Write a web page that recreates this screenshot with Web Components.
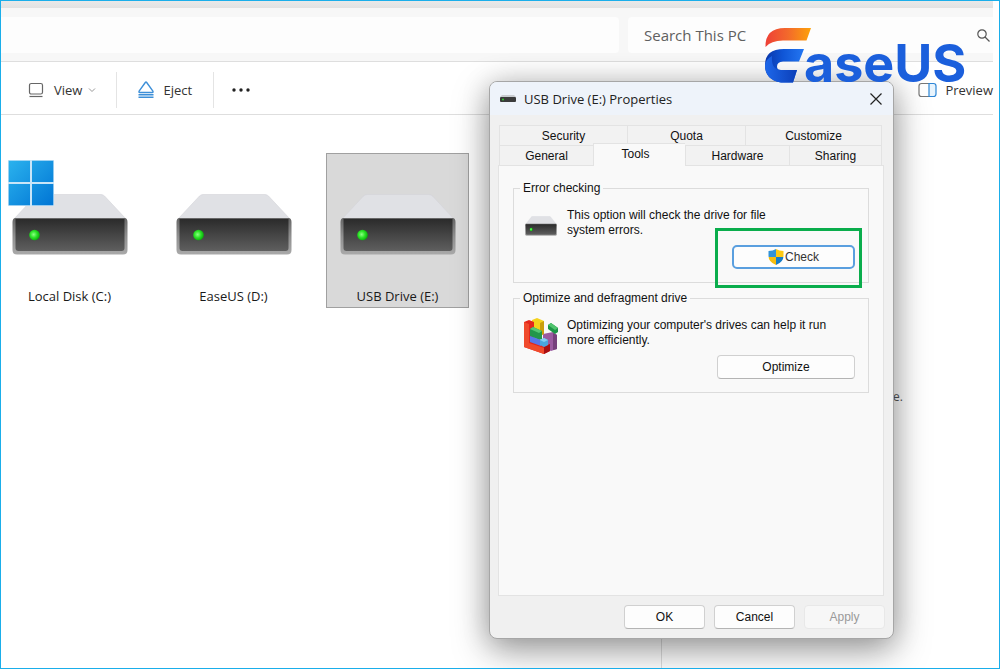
<!DOCTYPE html>
<html lang="en">
<head>
<meta charset="utf-8">
<title>USB Drive (E:) Properties</title>
<style>
  html, body { margin: 0; height: 100%; }
  body { background: #fff; font-family: "Open Sans", "Noto Sans", sans-serif; font-size: 13px; color: #222; }
</style>
</head>
<body>
<file-explorer></file-explorer>

<script>
const define = (name, html, setup) => {
  const template = document.createElement('template');
  template.innerHTML = html;
  customElements.define(name, class extends HTMLElement {
    constructor() {
      super();
      this.attachShadow({ mode: 'open' }).append(template.content.cloneNode(true));
    }
    connectedCallback() { if (setup) setup(this, this.shadowRoot); }
  });
};

/* Hard drive picture, fills its host's box */
define('drive-icon', `
<style>
  :host { display: block; width: 116px; height: 61px; }
  svg { display: block; width: 100%; height: 100%; }
</style>
<svg viewBox="0 0 116 61" preserveAspectRatio="none" aria-hidden="true">
  <defs>
    <linearGradient id="front" x1="0" y1="0" x2="0" y2="1">
      <stop offset="0" stop-color="#2b2b2b"/><stop offset="1" stop-color="#5f5f5f"/>
    </linearGradient>
    <linearGradient id="rim" x1="0" y1="0" x2="0" y2="1">
      <stop offset="0" stop-color="#666"/><stop offset=".5" stop-color="#8f8f8f"/><stop offset="1" stop-color="#a9a9a9"/>
    </linearGradient>
    <radialGradient id="led" cx=".42" cy=".45" r=".6">
      <stop offset="0" stop-color="#8dff85"/><stop offset=".5" stop-color="#2fe32a"/><stop offset="1" stop-color="#06a808"/>
    </radialGradient>
  </defs>
  <path d="M27 0.500H89Q91 .5 92.500 2L114 25H2L23.500 2Q25 .5 27 .5Z" fill="#e0e1e5" stroke="#d3d4d8" stroke-width=".6"/>
  <path d="M3 24H113Q115.500 24.500 115.500 28V56Q115.500 60.500 111 60.500H5Q.5 60.500 .5 56V28Q.5 24.500 3 24Z" fill="url(#rim)"/>
  <path d="M3.500 25H112.500V54Q112.500 57 109.500 57H6.500Q3.500 57 3.500 54Z" fill="url(#front)"/>
  <circle cx="22.500" cy="41" r="5.300" fill="url(#led)"/>
</svg>`);

define('windows-logo', `
<style>:host { display: block; width: 46px; } svg { display: block; width: 100%; }</style>
<svg viewBox="0 0 46 46" aria-hidden="true">
  <defs><linearGradient id="w" gradientUnits="userSpaceOnUse" x1="0" y1="0" x2="46" y2="46">
    <stop offset="0" stop-color="#2bb3ee"/><stop offset="1" stop-color="#0074d4"/></linearGradient></defs>
  <path d="M0 0H46V46H0Z" fill="#c9e5f8"/>
  <path d="M.7.700H22V22H.7ZM24 .7H45.300V22H24ZM.7 24H22V45.300H.7ZM24 24H45.300V45.300H24Z" fill="url(#w)"/>
</svg>`);

define('drive-tile', `
<style>
  :host { display: block; position: relative; box-sizing: border-box; flex: none; width: 143px; height: 155px;
          padding-top: 40px; border: 1px solid transparent; }
  :host([selected]) { background: #d9d9d9; border-color: #a0a0a0; }
  drive-icon { margin: 0 auto; }
  .label { margin-top: 32px; text-align: center; font-size: 13px; line-height: 18px; color: #1a1a1a; }
  ::slotted([slot=badge]) { position: absolute; left: 9px; top: 6px; }
</style>
<drive-icon></drive-icon>
<div class="label"><slot></slot></div>
<slot name="badge"></slot>`);

define('address-bar', `
<style>
  :host { display: grid; grid-template-columns: 618fr 365fr; gap: 9px; padding: 9px 0 8px; background: #f7f7f7; border-bottom: 1px solid #dedede; }
  input { min-width: 0; height: 36px; box-sizing: border-box; border: 0; border-radius: 0 4px 4px 0; background: #fdfdfd; }
  .search { min-width: 0; display: flex; align-items: center; box-sizing: border-box;
            height: 36px; padding: 0 3px 0 16px; background: #fdfdfd; border-radius: 4px 0 0 4px; }
  .search input { flex: 1; padding: 0; font: 15px/20px "Open Sans", sans-serif; }
  .search input::placeholder { color: #606060; opacity: 1; }
  svg { flex: none; width: 13px; height: 13px; }
</style>
<input type="text" aria-label="Address">
<label class="search">
  <input type="search" placeholder="Search This PC" aria-label="Search This PC">
  <svg viewBox="0 0 13 13" fill="none" stroke="#555" stroke-width="1.200" aria-hidden="true"><circle cx="5" cy="5" r="4.200"/><path d="M8 8L12.500 12.500"/></svg>
</label>`);

define('tool-bar', `
<style>
  :host { display: flex; align-items: center; box-sizing: border-box; height: 53px; padding-top: 3px; background: #fff; border-bottom: 1px solid #dedede; }
  button { display: flex; align-items: center; gap: 8px; height: 36px; box-sizing: border-box; border: 0; background: none;
           font: 13px/20px "Open Sans", sans-serif; color: #333; padding: 0; }
  .view { margin-left: 27px; gap: 10px; }
  .view .arrow { margin-left: -4px; }
  .rule { width: 1px; height: 36px; background: #e4e4e4; }
  .rule.first { margin: 0 20px; }
  .rule.second { margin: 0 17px 0 21px; }
  .preview { margin-left: auto; }
</style>
<button class="view">
  <svg width="16" height="16" viewBox="0 0 16 16" fill="none" stroke="#666" stroke-width="1.200" aria-hidden="true"><rect x="1.500" y="1.500" width="13" height="10.500" rx="1.800"/><path d="M1.500 14.500H14.500"/></svg>
  View
  <svg class="arrow" width="8" height="8" viewBox="0 0 8 8" fill="none" stroke="#999" aria-hidden="true"><path d="M1 2.500L4 5.500L7 2.500"/></svg>
</button>
<span class="rule first"></span>
<button>
  <svg width="18" height="18" viewBox="0 0 18 18" fill="none" stroke="#3d8fd8" stroke-width="1.400" stroke-linejoin="round" aria-hidden="true"><path d="M8.300 1.500Q9 .6 9.700 1.500L15.900 10.200Q16.500 11.500 15.200 11.500H2.800Q1.500 11.500 2.100 10.200Z"/><path d="M1.500 13.700H16.500M1.500 16.300H16.500"/></svg>
  Eject
</button>
<span class="rule second"></span>
<button aria-label="More"><svg width="20" height="6" viewBox="0 0 20 6" fill="#222" aria-hidden="true"><circle cx="3" cy="3" r="1.700"/><circle cx="10" cy="3" r="1.700"/><circle cx="17" cy="3" r="1.700"/></svg></button>
<button class="preview">
  <svg width="19" height="16" viewBox="0 0 19 16" fill="none" stroke-width="1.200" aria-hidden="true"><path d="M11 1.500H3.500Q1 1.500 1 4V12Q1 14.500 3.500 14.500H11" stroke="#777"/><path d="M11 1.500H15.500Q18 1.500 18 4V12Q18 14.500 15.500 14.500H11Z" stroke="#2e86d6" fill="#e8f4fd"/></svg>
  Preview
</button>`);

define('win-button', `
<style>
  :host { display: block; width: 81px; }
  button { display: flex; align-items: center; justify-content: center; gap: 1px; box-sizing: border-box; width: 100%; height: 24px; padding: 0;
           border: 1px solid #d0d0d0; border-bottom-color: #b4b4b4; border-radius: 4px; background: #fdfdfd;
           font: 12px/14px "Liberation Sans", Arial, sans-serif; color: #111; }
  :host([primary]) button { border: 2px solid #5a9fdf; border-radius: 5px; color: #333; }
  button:disabled { color: #9a9a9a; background: #f7f7f7; border-color: #e8e8e8; }
</style>
<button><slot name="icon"></slot><span><slot></slot></span></button>`,
(host, root) => { root.querySelector('button').disabled = host.hasAttribute('disabled'); });

define('shield-icon', `
<style>:host, svg { display: block; width: 16px; height: 16px; }</style>
<svg viewBox="0 0 16 16" aria-hidden="true">
  <defs><clipPath id="c"><path d="M8 0Q11 2 15.500 2V7Q15.500 13 8 16Q.5 13 .5 7V2Q5 2 8 0Z"/></clipPath></defs>
  <g clip-path="url(#c)"><path d="M0 0H8V8H0Z" fill="#3293d8"/><path d="M8 0H16V8H8Z" fill="#fcc912"/><path d="M0 8H8V16H0Z" fill="#f7bd0d"/><path d="M8 8H16V16H8Z" fill="#177cc6"/></g>
</svg>`);

define('defrag-icon', `
<style>:host { display: block; width: 36px; } svg { display: block; width: 100%; }</style>
<svg viewBox="0 0 36 36" aria-hidden="true">
  <path d="M20 16L30 14L34 17V31L28 33L20 29Z" fill="#9a5aa0"/><path d="M30 15L34 17V31L30 32Z" fill="#76407c"/>
  <path d="M9 2L14 0L21 3V16L16 18L9 14Z" fill="#f4d21c"/><path d="M17 5L21 3V16L17 18Z" fill="#c99e0c"/>
  <path d="M1 4L6 2L11 4V23L22 28L27 26V33L21 36L1 29Z" fill="#e3261c"/>
  <path d="M1 4L6 6V25L21 30V36L1 29Z" fill="#f04a2c"/><path d="M21 29L27 26V33L21 36Z" fill="#a80f12"/>
  <path d="M7 11L10 9L19 13V21L16 22L7 18Z" fill="#22964a"/><path d="M7 11L10 9L19 13L16 15Z" fill="#55c772"/>
  <path d="M7 18L18 22V28L7 24Z" fill="#5877ea"/>
  <path d="M17 22L21 20L25 22V27L21 29L17 27Z" fill="#4aa5dc"/><path d="M17 22L21 20L25 22L21 24Z" fill="#83cdf2"/>
  <path d="M25 7L28 5L35 10V14L32 16L25 11Z" fill="#1c9446"/><path d="M25 7L28 5L35 10L32 12Z" fill="#4fc36c"/>
</svg>`);

define('tool-group', `
<style>
  :host { display: block; }
  fieldset { margin: 0; padding: 13px 13px 13px 9px; border: 1px solid #dcdcdc; min-width: 0; }
  legend { margin-left: -3px; padding: 0 3px; height: 14px; line-height: 14px; }
  .row { display: grid; grid-template-columns: 36px 1fr; column-gap: 8px; height: 30px; }
  .icon { display: grid; place-items: center; height: 36px; }
  p { margin: 0; line-height: 15px; max-width: 270px; }
  .actions { display: flex; justify-content: flex-end; margin-top: 7px; }
</style>
<fieldset>
  <legend></legend>
  <div class="row"><div class="icon"><slot name="icon"></slot></div><p><slot></slot></p></div>
  <div class="actions"><slot name="action"></slot></div>
</fieldset>`,
(host, root) => { root.querySelector('legend').textContent = host.getAttribute('heading'); });

define('tab-strip', `
<style>
  :host { display: block; margin: 0 2px 0 1px; }
  div { display: grid; height: 20px; }
  .back { grid-template-columns: 128fr 118fr 137fr; }
  .front { grid-template-columns: 94fr 92fr 104fr 93fr; }
  button { min-width: 0; padding: 0; background: #f2f2f2; border: 1px solid #e3e3e3; border-width: 1px 0 0 1px;
           font: 12px/18px "Liberation Sans", Arial, sans-serif; color: #111; }
  button:last-child { border-right-width: 1px; }
  button[aria-selected=true] { position: relative; margin: -2px 0 -1px; padding: 0 8px 2px 0; background: #f9f9f9; }
</style>
<div class="back" role="tablist" aria-label="More property pages">
  <button role="tab">Security</button><button role="tab">Quota</button><button role="tab">Customize</button>
</div>
<div class="front" role="tablist" aria-label="Property pages">
  <button role="tab">General</button><button role="tab" aria-selected="true">Tools</button><button role="tab">Hardware</button><button role="tab">Sharing</button>
</div>`);

define('properties-window', `
<style>
  :host { display: block; box-sizing: border-box; width: 405px; border: 1px solid #a6a6a6; border-radius: 8px; background: #f0f0f0;
          box-shadow: 0 12px 36px rgba(0,0,0,.34), 0 2px 28px rgba(0,0,0,.18);
          font: 12px/15px "Liberation Sans", Arial, sans-serif; color: #111; }
  header { display: flex; align-items: center; height: 33px; padding: 0 11px 0 10px; background: #eef3fa; border-radius: 7px 7px 0 0; }
  h1 { flex: 1; margin: 0 0 0 8px; font: 13px/18px "Open Sans", sans-serif; color: #222; }
  .close { display: grid; place-items: center; width: 12px; height: 12px; padding: 0; border: 0; background: none; }
  main { padding: 10px 9px 0 8px; }
  .panel { box-sizing: border-box; min-height: 431px; padding: 15px 14px; border: 1px solid #e3e3e3; background: #f9f9f9;
           display: flex; flex-direction: column; gap: 8px; }
  footer { display: flex; justify-content: flex-end; gap: 9px; padding: 9px 8px; }
  .small { width: 32px; height: 20px; }
  .check { width: 123px; }
  .optimize { width: 138px; }
  .marked { position: relative; }
  .marked::after { content: ""; position: absolute; inset: -17px -7px -19px -17px; border: 3px solid #0aad4c; pointer-events: none; }
</style>
<header>
  <svg width="16" height="8" viewBox="0 0 16 8" aria-hidden="true"><path d="M2 0H14L16 2H0Z" fill="#c9ccd0"/><rect y="2" width="16" height="5" rx="1" fill="#3b3b3b"/><circle cx="3" cy="4.500" r="1" fill="#2fd32f"/></svg>
  <h1>USB Drive (E:) Properties</h1>
  <button class="close" aria-label="Close"><svg width="12" height="12" viewBox="0 0 12 12" stroke="#222" stroke-width="1.200" aria-hidden="true"><path d="M.5.500L11.500 11.500M11.500.500L.5 11.500"/></svg></button>
</header>
<main>
  <tab-strip></tab-strip>
  <div class="panel" role="tabpanel" aria-label="Tools">
    <tool-group heading="Error checking">
      <drive-icon slot="icon" class="small"></drive-icon>
      This option will check the drive for file<br>system errors.
      <div slot="action" class="marked"><win-button class="check" primary><shield-icon slot="icon"></shield-icon>Check</win-button></div>
    </tool-group>
    <tool-group heading="Optimize and defragment drive">
      <defrag-icon slot="icon"></defrag-icon>
      Optimizing your computer's drives can help it run<br>more efficiently.
      <win-button slot="action" class="optimize">Optimize</win-button>
    </tool-group>
  </div>
</main>
<footer><win-button>OK</win-button><win-button>Cancel</win-button><win-button disabled>Apply</win-button></footer>`,
host => { host.setAttribute('role', 'dialog'); });

define('brand-mark', `
<style>
  :host { display: flex; align-items: flex-start; color: #1b5fdc; pointer-events: none; }
  svg { flex: none; }
  span { font: 700 52px/40px Inter, sans-serif; margin: 17px 0 0 -8px; }
</style>
<svg width="48" height="56" viewBox="0 0 48 56" aria-hidden="true">
  <defs>
    <linearGradient id="o" x1="0" x2="1" y1="0" y2="0"><stop offset="0" stop-color="#ee4037"/><stop offset=".5" stop-color="#f36a2b"/><stop offset="1" stop-color="#fda20a"/></linearGradient>
    <linearGradient id="b" x1="0" x2="1" y1="0" y2="0"><stop offset="0" stop-color="#0a36a8"/><stop offset=".45" stop-color="#0f55d6"/><stop offset="1" stop-color="#2477f2"/></linearGradient>
    <linearGradient id="d" x1="0" x2="1" y1="0" y2="0"><stop offset="0" stop-color="#1d67ea"/><stop offset="1" stop-color="#0c3fb8"/></linearGradient>
  </defs>
  <path d="M47 1L42.500 13.500H19Q7 13.500 1.500 20Q1 1 21 1Z" fill="url(#o)"/>
  <path d="M40 22L35 34.500H19Q13 35 13 39.500Q13 43 17 43H33L29 55.500H17Q1 53 1 38Q1 22 20 22Z" fill="url(#b)"/>
  <path d="M1 38Q2 32 8 29Q7 43 17 43H33L29 55.500H17Q1 53 1 38Z" fill="url(#d)"/>
</svg>
<span>aseUS</span>`);

define('file-explorer', `
<style>
  :host { display: flex; flex-direction: column; position: relative; box-sizing: border-box; min-height: 100%; border: 1px solid #1aaeea;
          background: #fff; overflow: hidden; }
  .strip { height: 7px; background: linear-gradient(#e9e9e9, #e2e2e2); }
  .strip, address-bar, tool-bar { margin-right: 6px; }
  .content { flex: 1; display: grid; grid-template-columns: 660fr 338fr; }
  .drives { display: flex; align-items: flex-start; gap: 21px; min-width: 0; padding-top: 38px; }
  .drives drive-tile:first-child { margin-left: -3px; }
  aside { border-left: 1px solid #dedede; padding: 273px 96px 0 0; text-align: right; font-size: 12px; line-height: 18px; color: #555; }
  properties-window { position: absolute; left: 488px; top: 80px; }
  brand-mark { position: absolute; left: 763px; top: 26px; }
</style>
<div class="strip"></div>
<address-bar></address-bar>
<tool-bar></tool-bar>
<div class="content">
  <div class="drives">
    <drive-tile>Local Disk (C:)<windows-logo slot="badge"></windows-logo></drive-tile>
    <drive-tile>EaseUS (D:)</drive-tile>
    <drive-tile selected>USB Drive (E:)</drive-tile>
  </div>
  <aside>e.</aside>
</div>
<properties-window aria-label="USB Drive (E:) Properties"></properties-window>
<brand-mark></brand-mark>`);
</script>
</body>
</html>
